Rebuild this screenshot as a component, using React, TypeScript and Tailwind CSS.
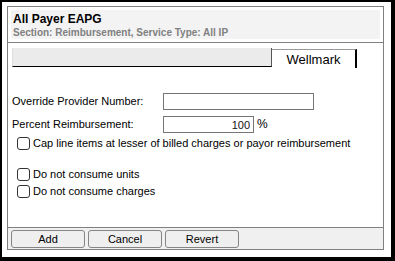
import React from "react";

function CheckRow({ label, className }: { label: string; className?: string }) {
  return (
    <div className={"flex h-[17px] items-center pl-[5px] " + (className || "")}>
      <span className="block h-[13px] w-[13px] shrink-0 rounded-[3px] border border-[#333] bg-white" />
      <span className="ml-[3px] leading-[17px]">{label}</span>
    </div>
  );
}

function Btn({ children }: { children: React.ReactNode }) {
  return (
    <button className="h-[18px] w-[74px] rounded-[3px] border border-[#858585] bg-[#efefef] text-[11px] leading-[16px] text-black">
      {children}
    </button>
  );
}

export default function App() {
  return (
    <div
      className="flex h-[261px] w-[395px] border-b-4 border-l-2 border-r-4 border-t-2 border-black bg-white pb-[7px] pl-[5px] pr-[7px] pt-[4px] text-[11px] text-black"
      style={{ fontFamily: '"Liberation Sans", Arial, sans-serif' }}
    >
      <div className="flex flex-1 flex-col border border-[#808080]">
        {/* header */}
        <div className="border-b border-[#808080] p-[3px]">
          <div className="h-[29px] bg-[#f3f3f3] px-[2px] pt-[2px]">
            <div className="text-[12px] font-bold leading-[15px]">All Payer EAPG</div>
            <div className="text-[10px] font-bold leading-[12px] text-[#808080]">
              Section: Reimbursement, Service Type: All IP
            </div>
          </div>
        </div>

        <div className="flex flex-1 flex-col px-[4px]">
          {/* tabs */}
          <div className="mt-[5px] flex h-[20px] items-stretch">
            <div className="h-[19px] w-[260px] border-b border-r border-b-black border-r-[#555] border-l border-l-[#ddd] bg-[#ebebeb]" />
            <div className="mt-[1px] flex h-[19px] w-[85px] items-center justify-center border-r-2 border-t border-r-black border-t-[#999] bg-white text-[13px] leading-[17px]">
              Wellmark
            </div>
          </div>

          {/* form */}
          <div className="mt-[25px] flex items-center">
            <label className="w-[151px] leading-[17px]">Override Provider Number:</label>
            <input
              className="h-[17px] w-[151px] border border-[#767676] bg-white px-[3px] text-[11px] outline-none"
              defaultValue=""
            />
          </div>
          <div className="mt-[6px] flex items-center">
            <label className="w-[151px] leading-[17px]">Percent Reimbursement:</label>
            <input
              className="h-[17px] w-[91px] border border-[#767676] bg-white px-[3px] text-right text-[11px] text-[#111] outline-none"
              defaultValue="100"
            />
            <span className="ml-[3px] text-[12px] leading-[17px]">%</span>
          </div>

          <CheckRow className="mt-[2px]" label="Cap line items at lesser of billed charges or payor reimbursement" />
          <CheckRow className="mt-[14px]" label="Do not consume units" />
          <CheckRow label="Do not consume charges" />
        </div>

        {/* footer */}
        <div className="flex h-[22px] gap-[3px] border-t border-[#808080] bg-[#f0f0f0] px-[3px] pt-[2px]">
          <Btn>Add</Btn>
          <Btn>Cancel</Btn>
          <Btn>Revert</Btn>
        </div>
      </div>
    </div>
  );
}
